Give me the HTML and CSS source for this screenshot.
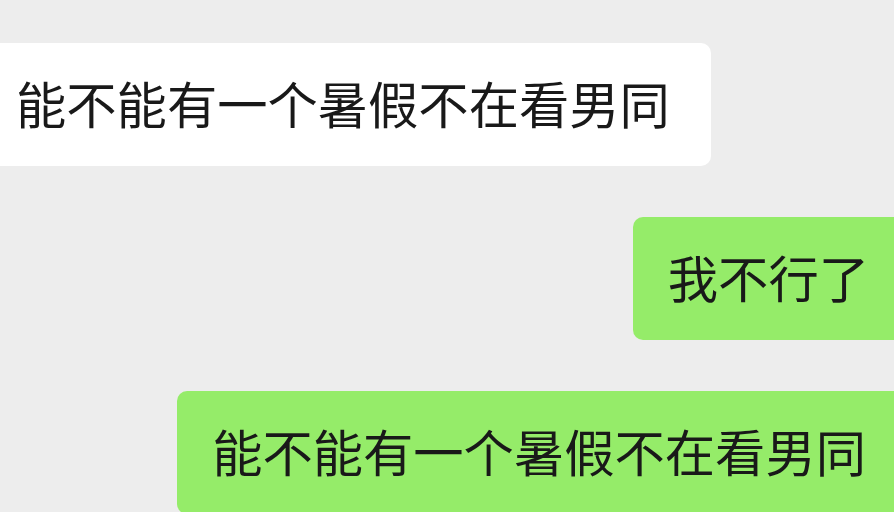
FILE: index.html
```html
<!DOCTYPE html>
<html lang="zh-CN">
<head>
    <meta charset="UTF-8">
    <title>聊天</title>
    <link rel="stylesheet" href="styles.css">
</head>
<body>

<div class="chat">
    <div class="msg msg-left">
        <div class="bubble bubble-white">能不能有一个暑假不在看男同</div>
    </div>
    <div class="msg msg-right">
        <div class="bubble bubble-green">我不行了</div>
    </div>
    <div class="msg msg-right">
        <div class="bubble bubble-green bubble-long">能不能有一个暑假不在看男同</div>
    </div>
</div>

</body>
</html>
```

FILE: styles.css
```css
:root {
    --background-color: #ededed;
    --bubble-white: #ffffff;
    --bubble-green: #95ec69;
    --text-color: #191919;
}
html {
    box-sizing: border-box;
}
*, *:before, *:after {
    box-sizing: inherit;
}
body {
    margin: 0;
    width: 894px;
    height: 512px;
    overflow: hidden;
    background-color: var(--background-color);
    color: var(--text-color);
    font-family: "Noto Sans CJK SC", "Noto Sans", sans-serif;
}
.chat {
    display: flex;
    flex-direction: column;
    gap: 51px;
    padding-top: 43px;
}
.msg {
    display: flex;
}
.msg-left {
    justify-content: flex-start;
}
.msg-right {
    justify-content: flex-end;
}
.bubble {
    font-size: 50.3px;
    line-height: 71px;
    padding: 24px 0 28px;
    border-radius: 10px;
    white-space: nowrap;
}
.bubble-white {
    background-color: var(--bubble-white);
    margin-left: -40px;
    padding-left: 56px;
    padding-right: 41px;
}
.bubble-green {
    background-color: var(--bubble-green);
    margin-right: -40px;
    padding-left: 35px;
    padding-right: 65px;
}
.bubble-long {
    padding-right: 68px;
}
```
